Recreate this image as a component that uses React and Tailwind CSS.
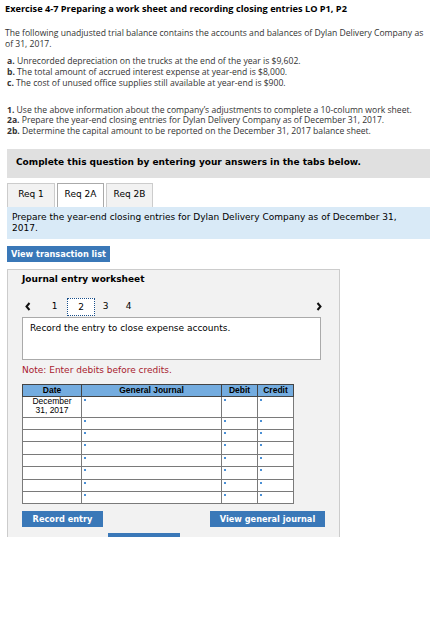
import React from 'react';

const rows = [0, 1, 2, 3, 4, 5, 6];

const Mark = () => <span className="absolute left-[2px] top-[2px] w-[2px] h-[2px] bg-[#4a8fd4]" />;

const Cell = ({ className, children, mark }) => (
  <td className={`relative border border-[#7a7a7a] p-0 ${className || ''}`}>
    {mark && <Mark />}
    {children}
  </td>
);

const Chevron = ({ dir }) => (
  <svg width="6" height="9" viewBox="0 0 6 9" className="block">
    <polyline
      points={dir === 'left' ? '4.5,1 1.5,4.5 4.5,8' : '1.5,1 4.5,4.5 1.5,8'}
      fill="none"
      stroke="#111"
      strokeWidth="2"
    />
  </svg>
);

const App = () => {
  return (
    <div className="w-[430px] h-[626px] bg-white overflow-hidden">
      <div className="h-[537px] overflow-hidden">
        <div className="px-[5px] pt-[3px] text-[#333] font-['Open_Sans',sans-serif] text-[8.6px] leading-[10.7px]">
          <h1 className="text-black font-bold text-[9.2px] leading-[12px]">
            Exercise 4-7 Preparing a work sheet and recording closing entries LO P1, P2
          </h1>
          <p className="mt-[13px]">
            The following unadjusted trial balance contains the accounts and balances of Dylan Delivery Company as of 31, 2017.
          </p>
          <div className="mt-[7px] pl-[2px]">
            <p><b>a.</b> Unrecorded depreciation on the trucks at the end of the year is $9,602.</p>
            <p><b>b.</b> The total amount of accrued interest expense at year-end is $8,000.</p>
            <p><b>c.</b> The cost of unused office supplies still available at year-end is $900.</p>
          </div>
          <div className="mt-[16px] pl-[2px]">
            <p><b>1.</b> Use the above information about the company’s adjustments to complete a 10-column work sheet.</p>
            <p><b>2a.</b> Prepare the year-end closing entries for Dylan Delivery Company as of December 31, 2017.</p>
            <p><b>2b.</b> Determine the capital amount to be reported on the December 31, 2017 balance sheet.</p>
          </div>
        </div>

        <div className="ml-[7px] mt-[12px] font-['DejaVu_Sans',Verdana,sans-serif]">
          <div className="h-[29px] bg-[#e0e0e0] flex items-center pl-[9px] text-[9px] font-bold text-black">
            Complete this question by entering your answers in the tabs below.
          </div>
          <div className="flex gap-[2px] mt-[5px] text-[9px] text-black">
            <div className="w-[48px] h-[24px] flex items-center justify-center bg-[#f2f2f2] border border-b-0 border-[#cccccc]">Req 1</div>
            <div className="w-[47px] h-[24px] flex items-center justify-center bg-white border border-b-0 border-[#aaaaaa]">Req 2A</div>
            <div className="w-[47px] h-[24px] flex items-center justify-center bg-[#f2f2f2] border border-b-0 border-[#cccccc]">Req 2B</div>
          </div>
          <div className="bg-[#d9eaf7] h-[32px] pl-[5px] pt-[5px] pr-[20px] text-[9px] leading-[11px] text-black">
            Prepare the year-end closing entries for Dylan Delivery Company as of December 31, 2017.
          </div>
          <button className="mt-[7px] h-[16px] w-[103px] bg-[#3a78b8] text-white font-bold text-[8.2px] leading-[16px] whitespace-nowrap">
            View transaction list
          </button>

          <div className="mt-[5px] w-[333px] h-[300px] bg-[#f2f2f2] border border-[#cccccc] pl-[14px] pt-[3px]">
            <div className="text-[9px] font-bold text-black leading-[12px]">Journal entry worksheet</div>
            <div className="flex items-end h-[18px] mt-[13px] text-[9px] text-black">
              <span className="w-[20px] pl-[3px] self-center"><Chevron dir="left" /></span>
              <span className="w-[25px] text-center pb-[2px]">1</span>
              <span className="w-[28px] h-[18px] text-center leading-[16px] border border-dotted border-[#1a4f8a] bg-white">2</span>
              <span className="w-[21px] text-center pb-[2px]">3</span>
              <span className="w-[25px] text-center pb-[2px]">4</span>
              <span className="ml-auto mr-[17px] self-center"><Chevron dir="right" /></span>
            </div>
            <div className="mt-[1px] w-[299px] h-[43px] bg-white border border-[#aaaaaa] px-[7px] pt-[4px] text-[9px] text-black">
              Record the entry to close expense accounts.
            </div>
            <div className="mt-[5px] text-[9px] leading-[11px] text-[#a81a2e]">Note: Enter debits before credits.</div>
            <table className="mt-[8px] border-collapse font-['Liberation_Sans',Arial,sans-serif] text-[8.5px] text-black">
              <thead>
                <tr className="bg-[#74acdf] h-[12px] leading-[10px]">
                  <th className="w-[59px] border border-[#444] font-bold">Date</th>
                  <th className="w-[140px] border border-[#444] font-bold">General Journal</th>
                  <th className="w-[36px] border border-[#444] font-bold">Debit</th>
                  <th className="w-[36px] border border-[#444] font-bold">Credit</th>
                </tr>
              </thead>
              <tbody className="bg-white">
                <tr className="h-[21px]">
                  <Cell className="text-center align-top leading-[9.5px]">December<br />31, 2017</Cell>
                  <Cell mark />
                  <Cell mark />
                  <Cell mark />
                </tr>
                {rows.map((r) => (
                  <tr key={r} className="h-[12.4px]">
                    <Cell />
                    <Cell mark />
                    <Cell mark />
                    <Cell mark />
                  </tr>
                ))}
              </tbody>
            </table>
            <div className="flex mt-[7px] w-[303px] justify-between text-white font-bold text-[8.2px]">
              <button className="w-[81px] h-[16px] bg-[#3a78b8]">Record entry</button>
              <button className="w-[115px] h-[16px] bg-[#3a78b8] whitespace-nowrap">View general journal</button>
            </div>
            <button className="block ml-[86px] mt-[6px] w-[72px] h-[16px] bg-[#3a78b8] text-white font-bold text-[8.2px]">Clear entry</button>
          </div>
        </div>
      </div>
    </div>
  );
};

export default App;
